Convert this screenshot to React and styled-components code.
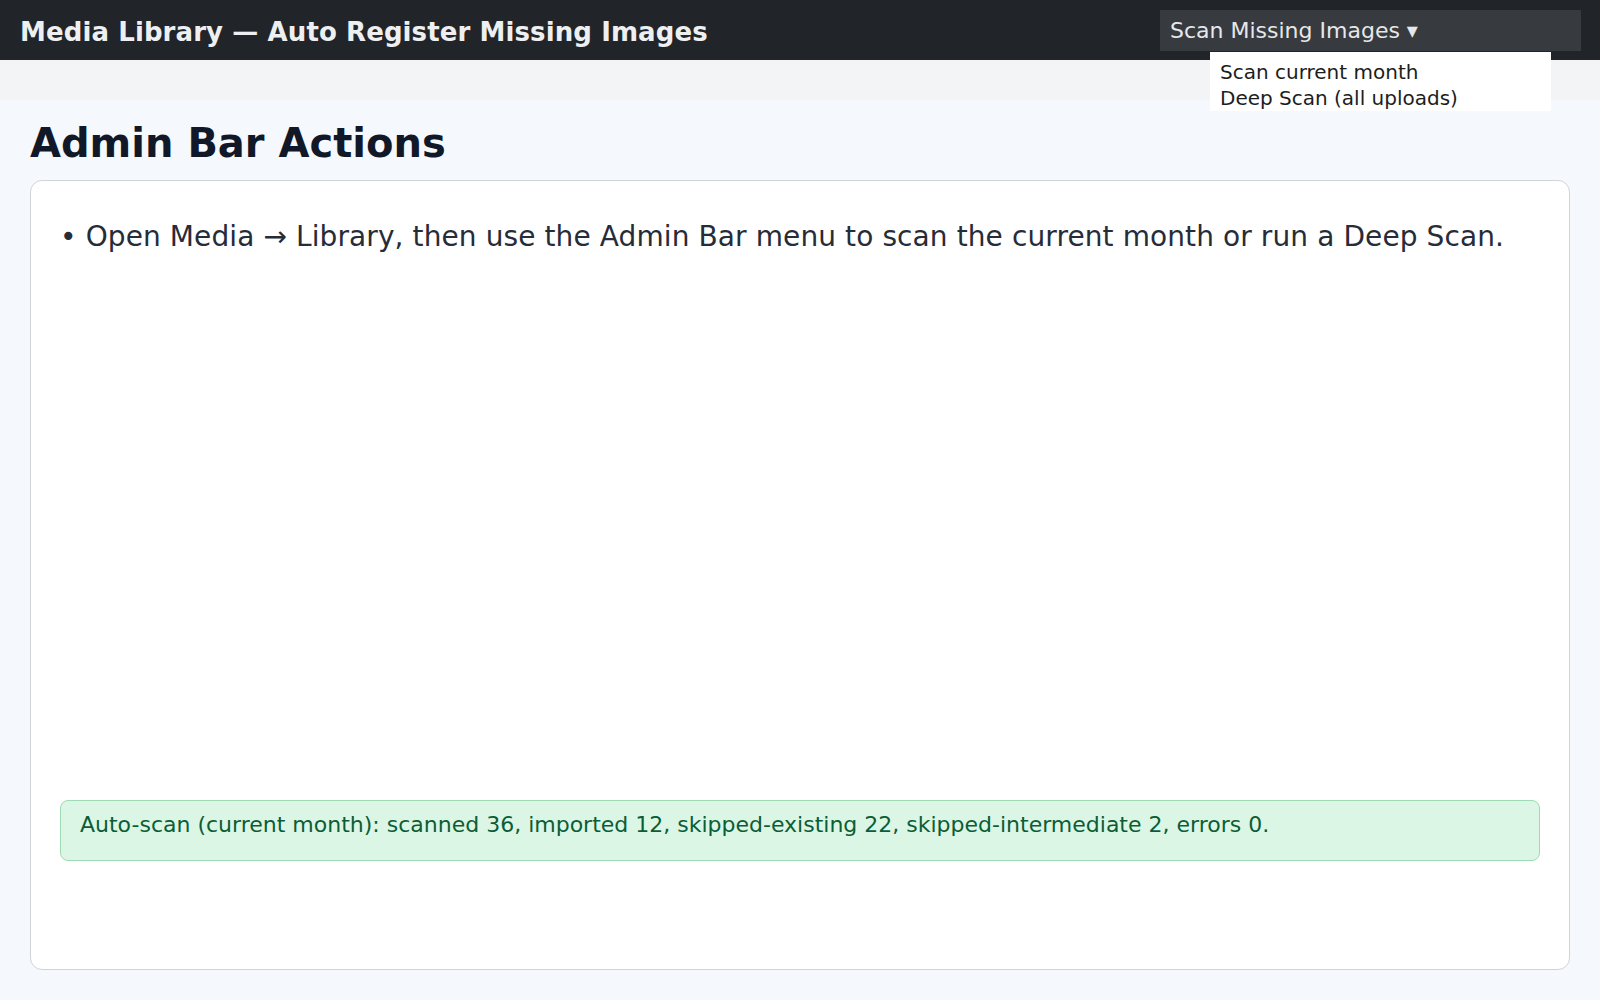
import React from "react";
import styled, { createGlobalStyle } from "styled-components";

const GlobalStyle = createGlobalStyle`
  html, body { margin: 0; padding: 0; }
  body {
    font-family: "DejaVu Sans", "Noto Sans", sans-serif;
    background: #f5f8fc;
  }
  * { box-sizing: border-box; }
`;

const Page = styled.div`
  display: flex;
  flex-direction: column;
  min-height: 100vh;
`;

const TopBar = styled.header`
  height: 60px;
  background: #212428;
  display: flex;
  align-items: center;
  justify-content: space-between;
  padding: 0 19px 0 20px;
  position: relative;
  z-index: 2;
`;

const Title = styled.h1`
  margin: 4px 0 0;
  font-size: 26px;
  letter-spacing: 0.1px;
  font-weight: 700;
  color: #eeeff1;
`;

const MenuWrap = styled.div`
  position: relative;
`;

const MenuButton = styled.button`
  width: 421px;
  height: 41px;
  border: 0;
  margin: 0;
  padding: 0 10px;
  background: #373a3f;
  color: #e6e7ea;
  font-family: inherit;
  font-size: 22px;
  text-align: left;
  display: flex;
  align-items: center;
`;

const Menu = styled.ul`
  position: absolute;
  top: 42px;
  left: 50px;
  width: 341px;
  margin: 0;
  padding: 7px 10px 0;
  list-style: none;
  background: #ffffff;
`;

const MenuItem = styled.li`
  font-size: 20px;
  line-height: 26px;
  color: #1c1d20;
`;

const Strip = styled.div`
  height: 40px;
  background: #f3f4f6;
`;

const Main = styled.main`
  flex: 1;
  display: flex;
  flex-direction: column;
  padding: 20px 30px 30px;
  background: #f5f8fc;
`;

const Heading = styled.h2`
  margin: 0 0 13px;
  font-size: 40px;
  line-height: 47px;
  font-weight: 700;
  color: #111827;
`;

const Card = styled.section`
  flex: 1;
  display: flex;
  flex-direction: column;
  background: #ffffff;
  border: 1px solid #cfd4db;
  border-radius: 12px;
  padding: 29px 29px 108px;
`;

const List = styled.ul`
  margin: 0;
  padding: 6px 0 0;
  list-style: none;
`;

const Item = styled.li`
  display: flex;
  gap: 9px;
  font-size: 28px;
  letter-spacing: 0.1px;
  line-height: 42px;
  color: #262c38;
`;

const Notice = styled.div`
  margin-top: auto;
  height: 61px;
  background: #dcf6e6;
  border: 1px solid #9ddcb3;
  border-radius: 8px;
  padding: 11px 19px;
  font-size: 22px;
  line-height: 26px;
  color: #0b5d36;
`;

export default function App() {
  return (
    <Page>
      <GlobalStyle />
      <TopBar>
        <Title>Media Library — Auto Register Missing Images</Title>
        <MenuWrap>
          <MenuButton>Scan Missing Images ▾</MenuButton>
          <Menu>
            <MenuItem>Scan current month</MenuItem>
            <MenuItem>Deep Scan (all uploads)</MenuItem>
          </Menu>
        </MenuWrap>
      </TopBar>
      <Strip />
      <Main>
        <Heading>Admin Bar Actions</Heading>
        <Card>
          <List>
            <Item>
              <span>•</span>
              <span>
                Open Media → Library, then use the Admin Bar menu to scan the
                current month or run a Deep Scan.
              </span>
            </Item>
          </List>
          <Notice>
            Auto-scan (current month): scanned 36, imported 12,
            skipped-existing 22, skipped-intermediate 2, errors 0.
          </Notice>
        </Card>
      </Main>
    </Page>
  );
}
